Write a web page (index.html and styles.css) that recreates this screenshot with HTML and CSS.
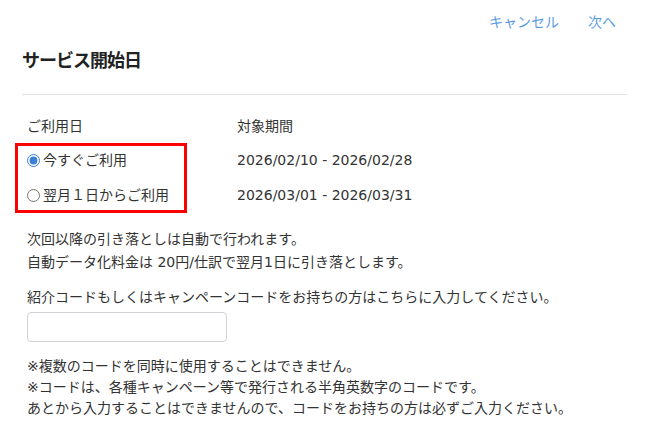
FILE: index.html
```html
<!DOCTYPE html>
<html lang="ja">
<head>
<meta charset="utf-8">
<title>サービス開始日</title>
<link rel="stylesheet" href="styles.css">
</head>
<body>
<div class="page">
  <div class="actions">
    <a class="link" href="#">キャンセル</a>
    <a class="link" href="#">次へ</a>
  </div>
  <h1 class="title">サービス開始日</h1>
  <div class="rule"></div>
  <div class="body">
    <div class="choice">
      <div class="col col-left">
        <div class="col-head">ご利用日</div>
        <div class="box highlight">
          <label class="row"><input type="radio" name="start" class="radio" checked>今すぐご利用</label>
          <label class="row"><input type="radio" name="start" class="radio">翌月１日からご利用</label>
        </div>
      </div>
      <div class="col">
        <div class="col-head">対象期間</div>
        <div class="box">
          <div class="row">2026/02/10 - 2026/02/28</div>
          <div class="row">2026/03/01 - 2026/03/31</div>
        </div>
      </div>
    </div>
    <p class="info">次回以降の引き落としは自動で行われます。<br>自動データ化料金は 20円/仕訳で翌月1日に引き落とします。</p>
    <p class="code-label">紹介コードもしくはキャンペーンコードをお持ちの方はこちらに入力してください。</p>
    <input type="text" class="code-input">
    <p class="notes">※複数のコードを同時に使用することはできません。<br>※コードは、各種キャンペーン等で発行される半角英数字のコードです。<br>あとから入力することはできませんので、コードをお持ちの方は必ずご入力ください。</p>
  </div>
</div>
</body>
</html>
```

FILE: styles.css
```css
html, body {
  margin: 0;
  padding: 0;
  background: #ffffff;
}
body {
  font-family: "DejaVu Sans", "Noto Sans CJK JP", sans-serif;
  font-size: 14px;
  color: #333333;
}
.page {
  padding: 0 25px 0 22px;
}
.actions {
  display: flex;
  justify-content: flex-end;
  gap: 29px;
  padding: 11px 11px 0 0;
  line-height: 22px;
}
.link {
  color: #5b9be3;
  text-decoration: none;
}
.title {
  margin: 15px 0 0;
  font-size: 18px;
  letter-spacing: -1px;
  line-height: 26px;
  font-weight: 700;
  color: #222222;
}
.rule {
  margin-top: 20px;
  height: 1px;
  background: #e3e3e3;
}
.body {
  padding-left: 5px;
}
.choice {
  display: flex;
  margin-top: 20px;
}
.col-left {
  width: 210px;
}
.col-head {
  line-height: 22px;
}
.box {
  margin-top: 6px;
  display: flex;
  flex-direction: column;
  gap: 7px;
  padding: 0 0 1px;
  border: 3px solid transparent;
}
.col .box {
  margin-left: -3px;
}
.col-left .highlight {
  border-color: #ff0000;
  margin-left: -12px;
  padding-left: 9px;
  width: 157px;
}
.row {
  display: flex;
  align-items: center;
  height: 28px;
  line-height: 28px;
}
.radio {
  width: 13px;
  height: 13px;
  margin: 0 3px 0 0;
  accent-color: #3b7fd9;
}
.info {
  margin: 15px 0 0;
  line-height: 23px;
}
.code-label {
  margin: 12px 0 0;
  line-height: 22px;
}
.code-input {
  display: block;
  box-sizing: border-box;
  margin-top: 4px;
  width: 200px;
  height: 30px;
  border: 1px solid #cfd3d8;
  border-radius: 4px;
  padding: 0 8px;
  font: inherit;
}
.notes {
  margin: 14px 0 0;
  line-height: 21px;
}
```
